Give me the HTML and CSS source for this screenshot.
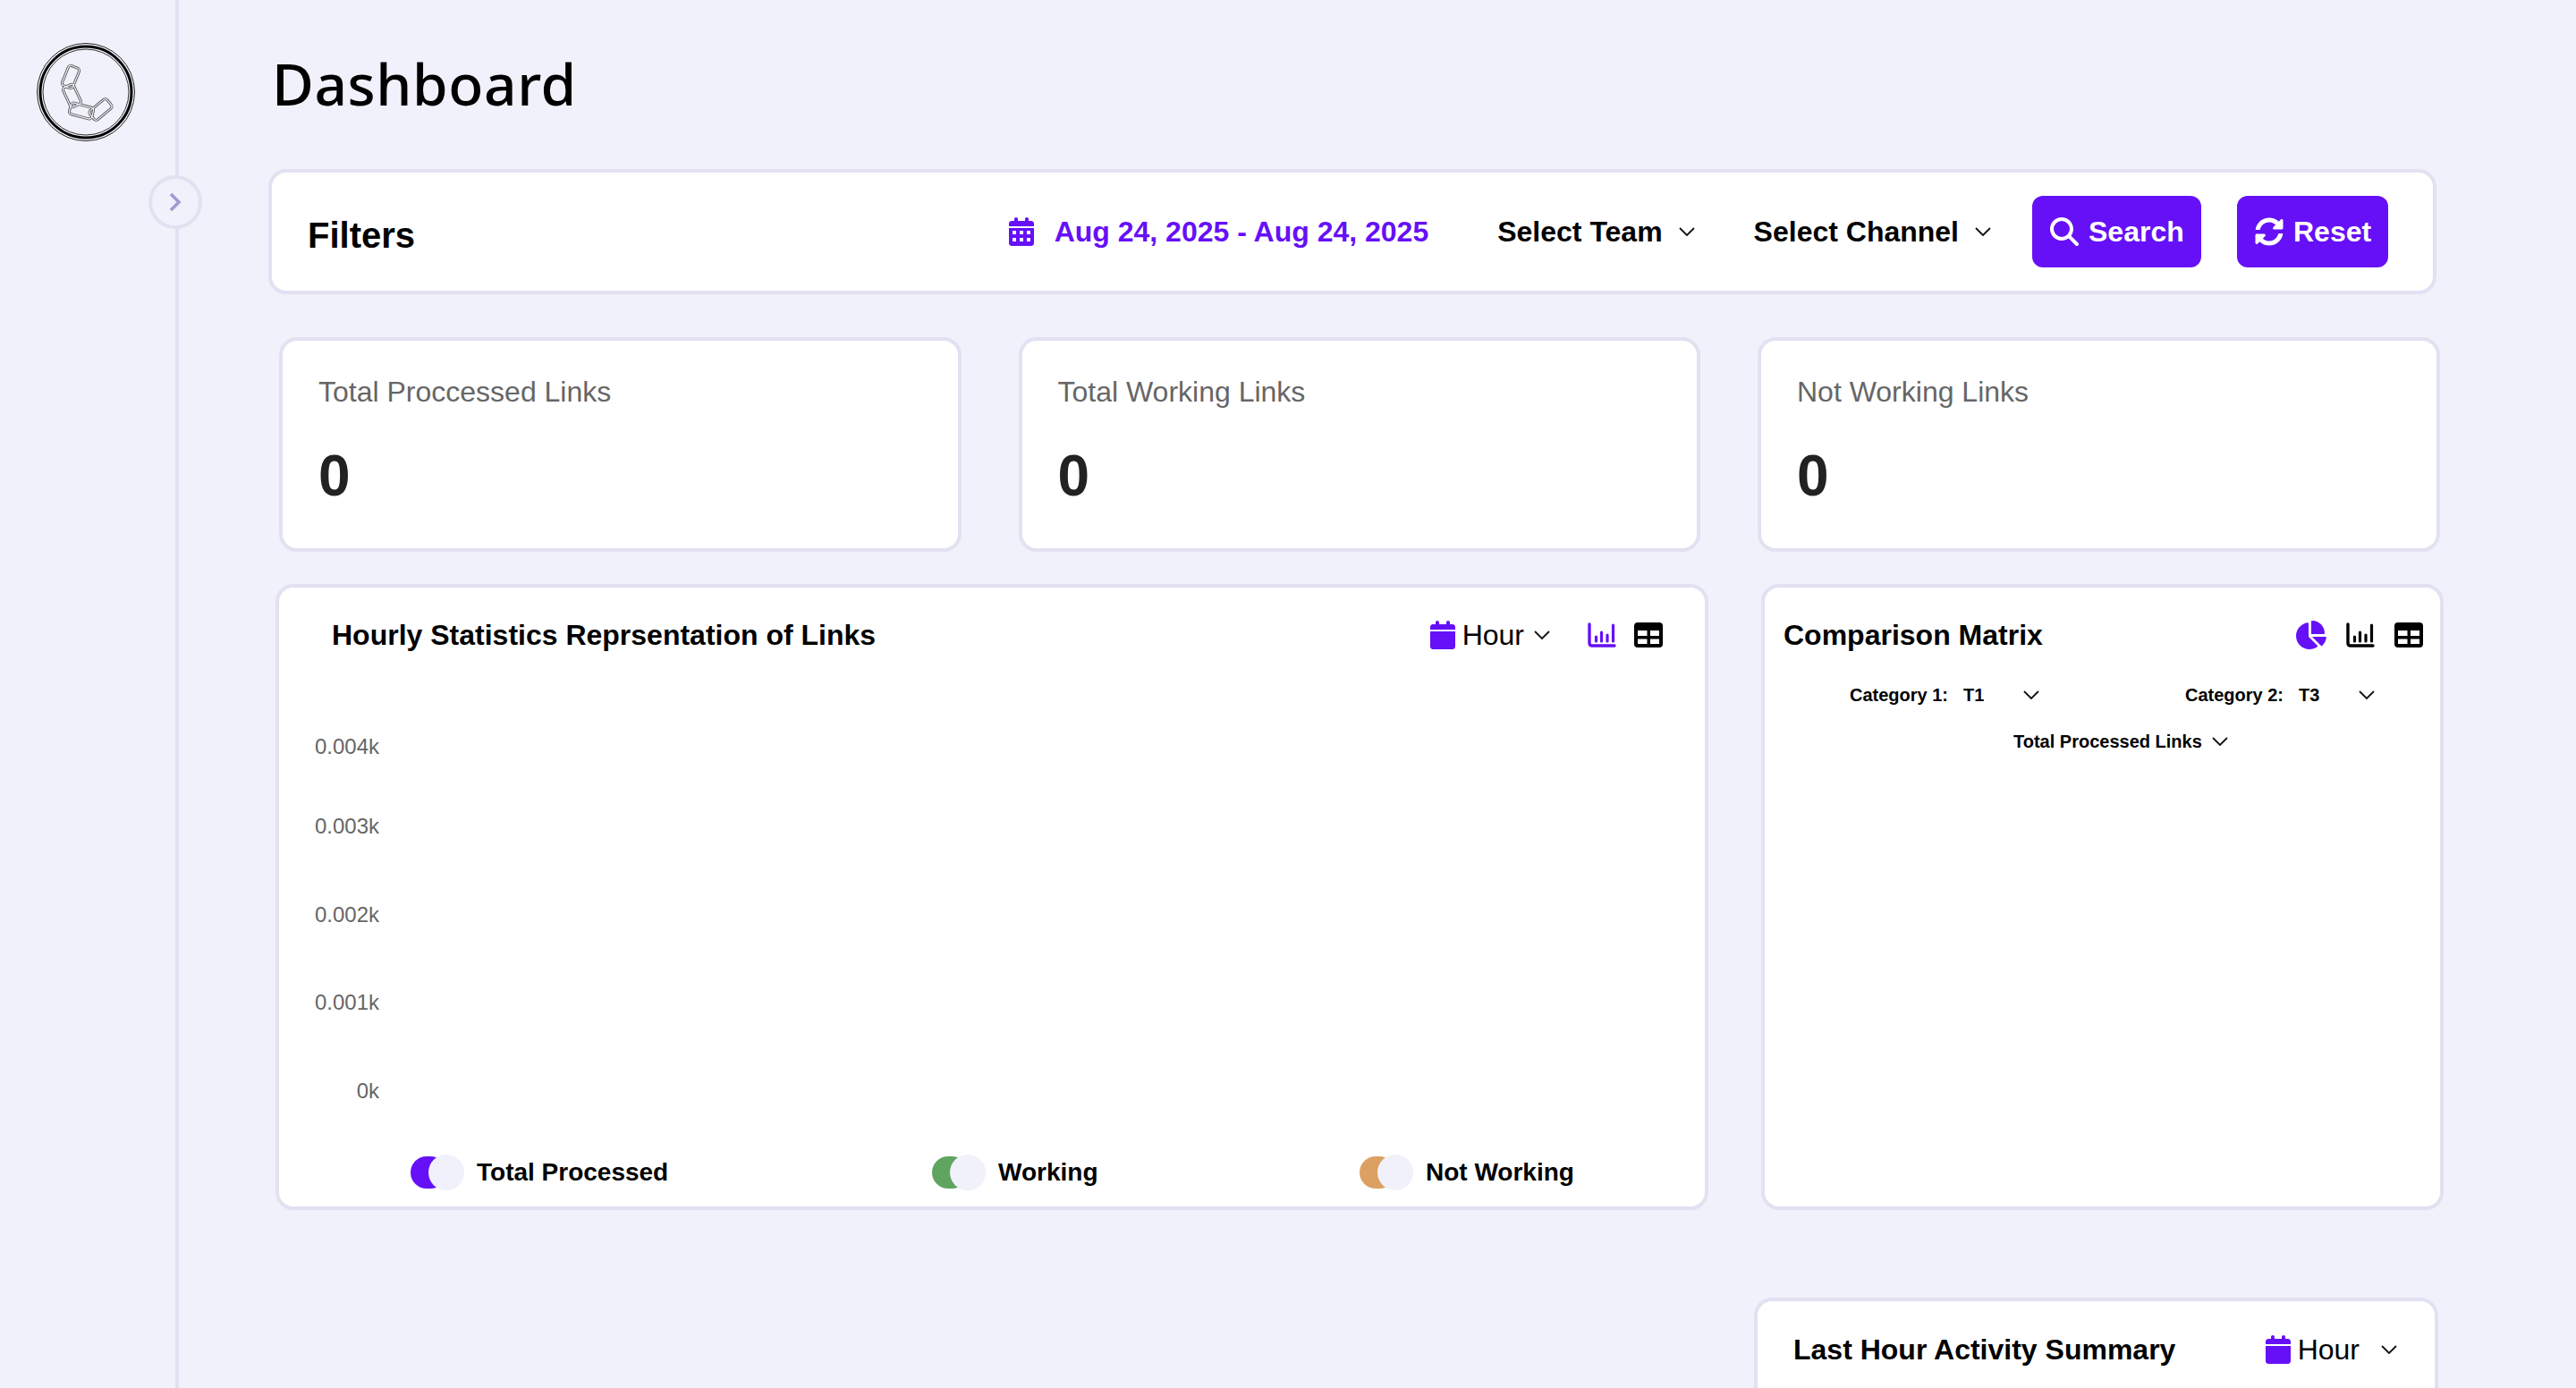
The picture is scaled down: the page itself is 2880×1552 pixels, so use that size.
FILE: index.html
```html
<!DOCTYPE html>
<html lang="en">
<head>
<meta charset="utf-8">
<title>Dashboard</title>
<link rel="stylesheet" href="styles.css">
</head>
<body>
<svg class="defs" aria-hidden="true">
  <symbol id="chev" viewBox="0 0 18 10"><path d="M1 1l8 8 8-8" fill="none" stroke="currentColor" stroke-width="1.8"/></symbol>
  <symbol id="cal" viewBox="0 0 448 512"><path fill="currentColor" d="M128 0c17.7 0 32 14.3 32 32V64H288V32c0-17.7 14.3-32 32-32s32 14.3 32 32V64h48c26.5 0 48 21.5 48 48v48H0V112C0 85.5 21.5 64 48 64H96V32c0-17.7 14.3-32 32-32zM0 192H448V464c0 26.5-21.5 48-48 48H48c-26.5 0-48-21.5-48-48V192z"/></symbol>
  <symbol id="bars" viewBox="0 0 32 28"><path d="M2 2V23q0 3 3 3H30" fill="none" stroke="currentColor" stroke-width="3.4" stroke-linecap="round"/><path d="M9.500 16v5M15.500 11v10M22 14v7M28.500 3v18" fill="none" stroke="currentColor" stroke-width="3.200" stroke-linecap="round"/></symbol>
  <symbol id="table" viewBox="0 0 32 28"><rect width="32" height="28" rx="4" fill="currentColor"/><path fill="#fff" d="M4 9h10.500v6H4zM18 9h10v6H18zM4 18.500h10.500V24H4zM18 18.500h10V24H18z"/></symbol>
</svg>

<aside class="sidebar">
  <svg class="logo" viewBox="0 0 110 110">
    <circle cx="55" cy="55" r="54.500" fill="none" stroke="#222" stroke-width="1"/>
    <circle cx="55" cy="55" r="51" fill="none" stroke="#000" stroke-width="3"/>
    <circle cx="55" cy="55" r="48" fill="none" stroke="#333" stroke-width="1"/>
    <g class="link-out">
      <rect x="31.500" y="26" width="13" height="24" rx="3" transform="rotate(22 38 38)"/>
      <rect x="33" y="47" width="13" height="24" rx="3" transform="rotate(-25 39.500 59)"/>
      <rect x="37" y="69.500" width="26" height="13" rx="3" transform="rotate(15 50 76)"/>
      <rect x="59" y="68" width="25" height="13" rx="3" transform="rotate(-40 71.500 74.500)"/>
    </g>
    <g class="link-in">
      <rect x="31.500" y="26" width="13" height="24" rx="3" transform="rotate(22 38 38)"/>
      <rect x="33" y="47" width="13" height="24" rx="3" transform="rotate(-25 39.500 59)"/>
      <rect x="37" y="69.500" width="26" height="13" rx="3" transform="rotate(15 50 76)"/>
      <rect x="59" y="68" width="25" height="13" rx="3" transform="rotate(-40 71.500 74.500)"/>
    </g>
  </svg>
  <button class="collapse" type="button">
    <svg class="collapse-icon" viewBox="0 0 14 22"><path d="M2 2l9 9-9 9" fill="none" stroke="#9d9dd2" stroke-width="3.600"/></svg>
  </button>
</aside>

<main class="main">
  <h1 class="page-title">Dashboard</h1>

  <section class="card filters">
    <h2 class="filters-title">Filters</h2>
    <div class="date-range">
      <svg class="date-icon" viewBox="0 0 448 512">
        <use href="#cal"/>
        <path fill="#fff" d="M64 240h64v64H64zM192 240h64v64h-64zM320 240h64v64h-64zM64 368h64v64H64zM192 368h64v64h-64zM320 368h64v64h-64z"/>
      </svg>
      <span>Aug 24, 2025 - Aug 24, 2025</span>
    </div>
    <div class="select select-team"><span>Select Team</span><svg class="chev"><use href="#chev"/></svg></div>
    <div class="select select-channel"><span>Select Channel</span><svg class="chev"><use href="#chev"/></svg></div>
    <button class="btn btn-search" type="button">
      <svg class="btn-icon" viewBox="0 0 512 512"><path fill="#fff" d="M416 208c0 45.900-14.900 88.300-40 122.700L502.600 457.400c12.500 12.500 12.500 32.800 0 45.300s-32.800 12.500-45.300 0L330.700 376c-34.400 25.200-76.800 40-122.700 40C93.100 416 0 322.900 0 208S93.100 0 208 0S416 93.100 416 208zM208 352a144 144 0 1 0 0-288 144 144 0 1 0 0 288z"/></svg>
      Search
    </button>
    <button class="btn btn-reset" type="button">
      <svg class="btn-icon" viewBox="0 0 512 512"><path fill="#fff" d="M370.720 133.280C339.458 104.008 298.888 87.962 255.848 88c-77.458.068-144.328 53.178-162.791 126.850-1.344 5.363-6.122 9.150-11.651 9.150H24.103c-7.498 0-13.194-6.807-11.807-14.176C33.933 94.924 134.813 8 256 8c66.448 0 126.791 26.136 171.315 68.685L463.030 40.970C478.149 25.851 504 36.559 504 57.941V192c0 13.255-10.745 24-24 24H345.941c-21.382 0-32.090-25.851-16.971-40.971l41.750-41.749zM32 296h134.059c21.382 0 32.090 25.851 16.971 40.971l-41.750 41.750c31.262 29.273 71.835 45.319 114.876 45.280 77.418-.07 144.315-53.144 162.787-126.849 1.344-5.363 6.122-9.150 11.651-9.150h57.304c7.498 0 13.194 6.807 11.807 14.176C478.067 417.076 377.187 504 256 504c-66.448 0-126.791-26.136-171.315-68.685L48.970 471.030C33.851 486.149 8 475.441 8 454.059V320c0-13.255 10.745-24 24-24z"/></svg>
      Reset
    </button>
  </section>

  <section class="stats">
    <article class="card stat"><p class="stat-label">Total Proccessed Links</p><p class="stat-value">0</p></article>
    <article class="card stat"><p class="stat-label">Total Working Links</p><p class="stat-value">0</p></article>
    <article class="card stat"><p class="stat-label">Not Working Links</p><p class="stat-value">0</p></article>
  </section>

  <section class="charts">
    <article class="card hourly">
      <header class="hourly-head">
        <h3 class="card-title">Hourly Statistics Reprsentation of Links</h3>
        <div class="period">
          <svg class="period-icon"><use href="#cal"/></svg>
          <span class="period-text">Hour</span>
          <svg class="chev period-chev"><use href="#chev"/></svg>
        </div>
        <svg class="view-icon active first"><use href="#bars"/></svg>
        <svg class="view-icon"><use href="#table"/></svg>
      </header>
      <svg class="axis" viewBox="0 0 1594 508">
        <text x="112" y="74">0.004k</text>
        <text x="112" y="163">0.003k</text>
        <text x="112" y="262">0.002k</text>
        <text x="112" y="360">0.001k</text>
        <text x="112" y="459">0k</text>
      </svg>
      <footer class="legend">
        <div class="legend-item item-total"><span class="toggle tone-purple"><span class="knob"></span></span>Total Processed</div>
        <div class="legend-item item-working"><span class="toggle tone-green"><span class="knob"></span></span>Working</div>
        <div class="legend-item"><span class="toggle tone-orange"><span class="knob"></span></span>Not Working</div>
      </footer>
    </article>

    <article class="card matrix">
      <header class="matrix-head">
        <h3 class="card-title">Comparison Matrix</h3>
        <svg class="pie-icon" viewBox="32 0 544 512"><path fill="currentColor" d="M304 240V16.600c0-9 7-16.600 16-16.600C443.700 0 544 100.300 544 224c0 9-7.600 16-16.600 16H304zM32 272C32 150.700 122.100 50.300 239 34.300c9.200-1.300 17 6.100 17 15.400V288L412.500 444.500c6.700 6.700 6.200 17.700-1.500 23.100C371.800 495.600 323.800 512 272 512C139.500 512 32 404.600 32 272zM558.400 288c9.300 0 16.600 7.800 15.300 17c-7.700 55.900-34.600 105.600-73.900 142.300c-6 5.600-15.400 5.200-21.200-.7L320 288H558.400z"/></svg>
        <svg class="view-icon"><use href="#bars"/></svg>
        <svg class="view-icon"><use href="#table"/></svg>
      </header>
      <div class="categories">
        <div class="category"><span class="category-label">Category 1:</span><span class="category-value">T1</span><svg class="chev"><use href="#chev"/></svg></div>
        <div class="category"><span class="category-label">Category 2:</span><span class="category-value">T3</span><svg class="chev"><use href="#chev"/></svg></div>
      </div>
      <div class="metric"><span>Total Processed Links</span><svg class="chev"><use href="#chev"/></svg></div>
    </article>
  </section>

  <section class="bottom">
    <article class="card summary">
      <header class="summary-head">
        <h3 class="card-title">Last Hour Activity Summary</h3>
        <div class="period">
          <svg class="period-icon summary-cal"><use href="#cal"/></svg>
          <span class="period-text">Hour</span>
          <svg class="chev summary-chev"><use href="#chev"/></svg>
        </div>
      </header>
    </article>
  </section>
</main>
</body>
</html>
```

FILE: styles.css
```css
* { box-sizing: border-box; }
html, body { margin: 0; height: 1552px; overflow: hidden; }
body {
  display: flex;
  background: #f0f1fa;
  font-family: "Liberation Sans", Arial, sans-serif;
  color: #000;
}
.defs { position: absolute; width: 0; height: 0; }

/* Sidebar */
.sidebar {
  position: relative;
  flex: 0 0 200px;
  height: 1552px;
  border-right: 4px solid #e2e1f2;
  padding: 48px 0 0 41px;
}
.logo { display: block; width: 110px; height: 110px; }
.link-out rect { fill: none; stroke: #555; stroke-width: 3; }
.link-in rect { fill: none; stroke: #f0f1fa; stroke-width: 1.2; }
.collapse {
  position: absolute;
  left: 166px;
  top: 196px;
  width: 60px;
  height: 60px;
  padding: 0;
  display: flex;
  align-items: center;
  justify-content: center;
  border: 4px solid #e2e1f2;
  border-radius: 50%;
  background: #f0f1fa;
}
.collapse-icon { width: 14px; height: 22px; }

/* Main */
.main { flex: 1; min-width: 0; padding-top: 60px; }
.page-title {
  margin: 0 0 0 104px;
  height: 129px;
  font: 500 64px/68px "Noto Sans", sans-serif;
  letter-spacing: 0.6px;
}
.card {
  background: #fff;
  border: 4px solid #e2e1f2;
  border-radius: 20px;
}

/* Filters */
.filters {
  display: flex;
  align-items: center;
  width: 2424px;
  height: 140px;
  margin-left: 100px;
  padding: 0 50px 0 40px;
}
.filters-title { margin: 8px auto 0 0; font-size: 40px; line-height: 46px; }
.date-range { display: flex; align-items: center; font-size: 32px; font-weight: 700; color: #6610f7; }
.date-icon { width: 28px; height: 32px; margin-right: 23px; color: #6610f7; }
.select { display: flex; align-items: center; font-size: 32px; font-weight: 700; }
.select-team { margin-left: 77px; }
.select-channel { margin-left: 66px; }
.chev { width: 18px; height: 10px; flex: none; color: #111; }
.select .chev { margin-left: 18px; }
.btn {
  display: flex;
  align-items: center;
  height: 80px;
  border: 0;
  border-radius: 12px;
  background: #6610f7;
  color: #fff;
  font: 700 32px "Liberation Sans", Arial, sans-serif;
}
.btn-search { width: 189px; margin-left: 46px; padding: 0 0 0 20px; }
.btn-reset { width: 169px; margin-left: 40px; padding: 0 0 0 20px; }
.btn-icon { width: 32px; height: 32px; margin-right: 11px; flex: none; }

/* Stats */
.stats {
  display: grid;
  grid-template-columns: repeat(3, 762.5px);
  gap: 64px;
  margin: 48px 0 0 112px;
}
.stat { height: 240px; padding: 39px 0 0 40px; }
.stat-label { margin: 0; font-size: 32px; line-height: 37px; color: #666; }
.stat-value { margin: 38px 0 0; font-size: 64px; line-height: 74px; font-weight: 700; color: #222; }

/* Charts row */
.charts { display: flex; gap: 59px; margin: 36px 0 0 108px; }
.card-title { margin: 0; font-size: 32px; line-height: 37px; font-weight: 700; }
.hourly { width: 1602px; height: 700px; display: flex; flex-direction: column; }
.hourly-head {
  display: flex;
  align-items: center;
  height: 106px;
  padding: 0 47px 0 59px;
}
.hourly-head .card-title { margin-right: auto; }
.period { display: flex; align-items: center; }
.period-icon { width: 28px; height: 32px; color: #6610f7; margin-right: 8px; }
.period-text { font: 400 32px/37px "Liberation Sans", Arial, sans-serif; }
.period-chev { margin-left: 11px; }
.view-icon { width: 32px; height: 28px; flex: none; margin-left: 20px; color: #000; }
.view-icon.first { margin-left: 42px; }
.view-icon.active { color: #6610f7; }
.axis { display: block; width: 1594px; height: 508px; flex: none; }
.axis text {
  font: 24px "Liberation Sans", Arial, sans-serif;
  fill: #666;
  text-anchor: end;
  dominant-baseline: middle;
}
.legend { display: flex; align-items: center; height: 78px; padding: 1px 0 0 147px; }
.legend-item { display: flex; align-items: center; font-size: 28px; font-weight: 700; }
.item-total { width: 583px; }
.item-working { width: 478px; }
.toggle { position: relative; display: block; width: 60px; height: 36px; margin-right: 14px; }
.toggle::before { content: ""; display: block; width: 40px; height: 36px; border-radius: 18px; background: currentColor; }
.knob {
  position: absolute;
  right: 0;
  top: -2px;
  width: 40px;
  height: 40px;
  border-radius: 50%;
  background: #f0f1fa;
}
.tone-purple { color: #6610f7; }
.tone-green { color: #5fa55f; }
.tone-orange { color: #dca063; }

/* Comparison matrix */
.matrix { width: 763px; height: 700px; }
.matrix-head { display: flex; align-items: center; height: 106px; padding: 0 19px 0 21px; }
.matrix-head .card-title { margin-right: auto; }
.pie-icon { width: 34px; height: 32px; color: #6610f7; flex: none; }
.matrix-head .view-icon { margin-left: 22px; }
.categories { display: flex; align-items: center; height: 30px; margin-top: -1px; padding-left: 95px; font-size: 20px; font-weight: 700; }
.category { display: flex; align-items: center; flex: 0 0 375px; }
.category-label { width: 127px; }
.category-value { width: 67px; }
.metric { display: flex; align-items: center; margin-top: 22px; height: 30px; padding-left: 278px; font-size: 20px; font-weight: 700; }
.metric .chev { margin-left: 11px; }

/* Bottom row */
.bottom { margin: 98px 0 0 100px; display: flex; justify-content: flex-end; width: 2426px; }
.summary { width: 765px; height: 300px; }
.summary-head { display: flex; align-items: center; height: 108px; padding: 0 42px 0 40px; }
.summary-head .card-title { margin-right: auto; }
.summary-cal { margin-right: 8px; }
.summary-chev { margin-left: 24px; }
```
